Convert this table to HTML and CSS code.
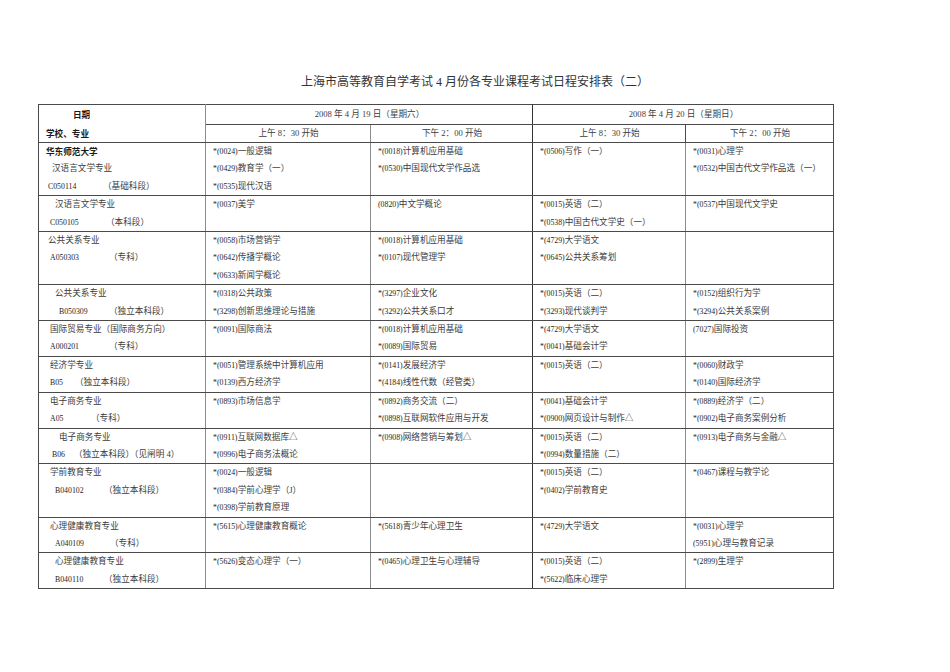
FILE: index.html
```html
<!DOCTYPE html>
<html lang="zh-CN">
<head>
<meta charset="utf-8">
<title>上海市高等教育自学考试4月份各专业课程考试日程安排表（二）</title>
<link rel="stylesheet" href="styles.css">
</head>
<body>
<h1 class="title">上海市高等教育自学考试 4 月份各专业课程考试日程安排表（二）</h1>
<table class="sheet">
<colgroup><col class="k1"><col class="k2"><col class="k3"><col class="k4"><col class="k5"></colgroup>
<tr class="h1">
<td rowspan="2" class="c1"><div class="b day">日期</div><div class="b lab">学校、专业</div></td>
<td colspan="2" class="ctr c3">2008 年 4 月 19 日（星期六）</td>
<td colspan="2" class="ctr">2008 年 4 月 20 日（星期日）</td>
</tr>
<tr class="h2">
<td class="ctr c2">上午 8：30 开始</td>
<td class="ctr c3">下午 2：00 开始</td>
<td class="ctr">上午 8：30 开始</td>
<td class="ctr">下午 2：00 开始</td>
</tr>

<tr>
<td class="c1"><div class="b">华东师范大学</div><div class="i3">汉语言文学专业</div><div class="i1"><span class="n w55">C050114</span>（基础科段）</div></td>
<td class="c2"><div><span class="n">*(0024)</span>一般逻辑</div><div><span class="n">*(0429)</span>教育学（一）</div><div><span class="n">*(0535)</span>现代汉语</div></td>
<td class="c3"><div><span class="n">*(0018)</span>计算机应用基础</div><div><span class="n">*(0530)</span>中国现代文学作品选</div></td>
<td class="c4"><div><span class="n">*(0506)</span>写作（一）</div></td>
<td><div><span class="n">*(0031)</span>心理学</div><div><span class="n">*(0532)</span>中国古代文学作品选（一）</div></td>
</tr>

<tr>
<td class="c1"><div class="i4">汉语言文学专业</div><div class="i2"><span class="n w56">C050105</span>（本科段）</div></td>
<td class="c2"><div><span class="n">*(0037)</span>美学</div></td>
<td class="c3"><div><span class="n">(0820)</span>中文学概论</div></td>
<td class="c4"><div><span class="n">*(0015)</span>英语（二）</div><div><span class="n">*(0538)</span>中国古代文学史（一）</div></td>
<td><div><span class="n">*(0537)</span>中国现代文学史</div></td>
</tr>

<tr>
<td class="c1"><div class="i1">公共关系专业</div><div class="i2"><span class="n w59">A050303</span>（专科）</div></td>
<td class="c2"><div><span class="n">*(0058)</span>市场营销学</div><div><span class="n">*(0642)</span>传播学概论</div><div><span class="n">*(0633)</span>新闻学概论</div></td>
<td class="c3"><div><span class="n">*(0018)</span>计算机应用基础</div><div><span class="n">*(0107)</span>现代管理学</div></td>
<td class="c4"><div><span class="n">*(4729)</span>大学语文</div><div><span class="n">*(0645)</span>公共关系筹划</div></td>
<td></td>
</tr>

<tr>
<td class="c1"><div class="i4">公共关系专业</div><div class="i5"><span class="n w50">B050309</span>（独立本科段）</div></td>
<td class="c2"><div><span class="n">*(0318)</span>公共政策</div><div><span class="n">*(3298)</span>创新思维理论与措施</div></td>
<td class="c3"><div><span class="n">*(3297)</span>企业文化</div><div><span class="n">*(3292)</span>公共关系口才</div></td>
<td class="c4"><div><span class="n">*(0015)</span>英语（二）</div><div><span class="n">*(3293)</span>现代谈判学</div></td>
<td><div><span class="n">*(0152)</span>组织行为学</div><div><span class="n">*(3294)</span>公共关系案例</div></td>
</tr>

<tr>
<td class="c1"><div class="i2">国际贸易专业（国际商务方向）</div><div class="i2"><span class="n w59">A000201</span>（专科）</div></td>
<td class="c2"><div><span class="n">*(0091)</span>国际商法</div></td>
<td class="c3"><div><span class="n">*(0018)</span>计算机应用基础</div><div><span class="n">*(0089)</span>国际贸易</div></td>
<td class="c4"><div><span class="n">*(4729)</span>大学语文</div><div><span class="n">*(0041)</span>基础会计学</div></td>
<td><div><span class="n">(7027)</span>国际投资</div></td>
</tr>

<tr>
<td class="c1"><div class="i2">经济学专业</div><div class="i2"><span class="n w25">B05</span>（独立本科段）</div></td>
<td class="c2"><div><span class="n">*(0051)</span>管理系统中计算机应用</div><div><span class="n">*(0139)</span>西方经济学</div></td>
<td class="c3"><div><span class="n">*(0141)</span>发展经济学</div><div><span class="n">*(4184)</span>线性代数（经管类）</div></td>
<td class="c4"><div><span class="n">*(0015)</span>英语（二）</div></td>
<td><div><span class="n">*(0060)</span>财政学</div><div><span class="n">*(0140)</span>国际经济学</div></td>
</tr>

<tr>
<td class="c1"><div class="i2">电子商务专业</div><div class="i2"><span class="n w41">A05</span>（专科）</div></td>
<td class="c2"><div><span class="n">*(0893)</span>市场信息学</div></td>
<td class="c3"><div><span class="n">*(0892)</span>商务交流（二）</div><div><span class="n">*(0898)</span>互联网软件应用与开发</div></td>
<td class="c4"><div><span class="n">*(0041)</span>基础会计学</div><div><span class="n">*(0900)</span>网页设计与制作△</div></td>
<td><div><span class="n">*(0889)</span>经济学（二）</div><div><span class="n">*(0902)</span>电子商务案例分析</div></td>
</tr>

<tr>
<td class="c1"><div class="i5">电子商务专业</div><div class="i3"><span class="n w22">B06</span>（独立本科段）（见闸明 4）</div></td>
<td class="c2"><div><span class="n">*(0911)</span>互联网数据库△</div><div><span class="n">*(0996)</span>电子商务法概论</div></td>
<td class="c3"><div><span class="n">*(0908)</span>网络营销与筹划△</div></td>
<td class="c4"><div><span class="n">*(0015)</span>英语（二）</div><div><span class="n">*(0994)</span>数量措施（二）</div></td>
<td><div><span class="n">*(0913)</span>电子商务与金融△</div></td>
</tr>

<tr>
<td class="c1"><div class="i2">学前教育专业</div><div class="i4"><span class="n w49">B040102</span>（独立本科段）</div></td>
<td class="c2"><div><span class="n">*(0024)</span>一般逻辑</div><div><span class="n">*(0384)</span>学前心理学（J）</div><div><span class="n">*(0398)</span>学前教育原理</div></td>
<td class="c3"></td>
<td class="c4"><div><span class="n">*(0015)</span>英语（二）</div><div><span class="n">*(0402)</span>学前教育史</div></td>
<td><div><span class="n">*(0467)</span>课程与教学论</div></td>
</tr>

<tr>
<td class="c1"><div class="i2">心理健康教育专业</div><div class="i4"><span class="n w55">A040109</span>（专科）</div></td>
<td class="c2"><div><span class="n">*(5615)</span>心理健康教育概论</div></td>
<td class="c3"><div><span class="n">*(5618)</span>青少年心理卫生</div></td>
<td class="c4"><div><span class="n">*(4729)</span>大学语文</div></td>
<td><div><span class="n">*(0031)</span>心理学</div><div><span class="n">(5951)</span>心理与教育记录</div></td>
</tr>

<tr>
<td class="c1"><div class="i4">心理健康教育专业</div><div class="i4"><span class="n w49">B040110</span>（独立本科段）</div></td>
<td class="c2"><div><span class="n">*(5626)</span>变态心理学（一）</div></td>
<td class="c3"><div><span class="n">*(0465)</span>心理卫生与心理辅导</div></td>
<td class="c4"><div><span class="n">*(0015)</span>英语（二）</div><div><span class="n">*(5622)</span>临床心理学</div></td>
<td><div><span class="n">*(2899)</span>生理学</div></td>
</tr>
</table>
</body>
</html>
```
FILE: styles.css
```css
html, body {
  margin: 0;
  padding: 0;
  background: #ffffff;
}

body {
  color: #3c3c3c;
  font-family: "Liberation Serif", "Noto Sans CJK SC", serif;
}

.title {
  margin: 74px 0 0;
  font-size: 12px;
  line-height: 16px;
  font-weight: normal;
  text-align: center;
  color: #333;
}

.sheet {
  margin: 14px 0 0 38px;
  width: 795px;
  table-layout: fixed;
  border-collapse: collapse;
  border: 1.5px solid #8c8c8c;
  font-size: 8.6px;
  line-height: 17.4px;
}

.k1 { width: 167px; }
.k2 { width: 165px; }
.k3 { width: 162px; }
.k4 { width: 153px; }
.k5 { width: 148px; }

.sheet td {
  border: 1px solid #4a4a4a;
  padding: 0 6px 0 7px;
  vertical-align: top;
  white-space: nowrap;
  overflow: hidden;
}

.sheet td.c1,
.sheet td.c2,
.sheet td.c4 {
  border-right: 1.5px solid #8c8c8c;
}

.sheet td.c3 {
  border-right: 1px solid #333;
}

.h1 td {
  height: 18px;
  line-height: 18px;
}

.h2 td {
  height: 17px;
  line-height: 17px;
}

.sheet td.ctr {
  text-align: center;
  vertical-align: middle;
}

.b {
  font-family: "Noto Sans CJK SC", sans-serif;
  font-weight: bold;
  color: #1a1a1a;
}

.day {
  padding-left: 27px;
  line-height: 19px;
}

.lab {
  line-height: 18px;
}

.n {
  font-size: 7.8px;
  color: #1e1e1e;
}

.i1 { padding-left: 2px; }
.i2 { padding-left: 4px; }
.i3 { padding-left: 6px; }
.i4 { padding-left: 9px; }
.i5 { padding-left: 13px; }

.w22, .w25, .w41, .w49, .w50, .w55, .w56, .w59 {
  display: inline-block;
}

.w22 { width: 22px; }
.w25 { width: 25px; }
.w41 { width: 41px; }
.w49 { width: 49px; }
.w50 { width: 50px; }
.w55 { width: 55px; }
.w56 { width: 56px; }
.w59 { width: 59px; }
```
